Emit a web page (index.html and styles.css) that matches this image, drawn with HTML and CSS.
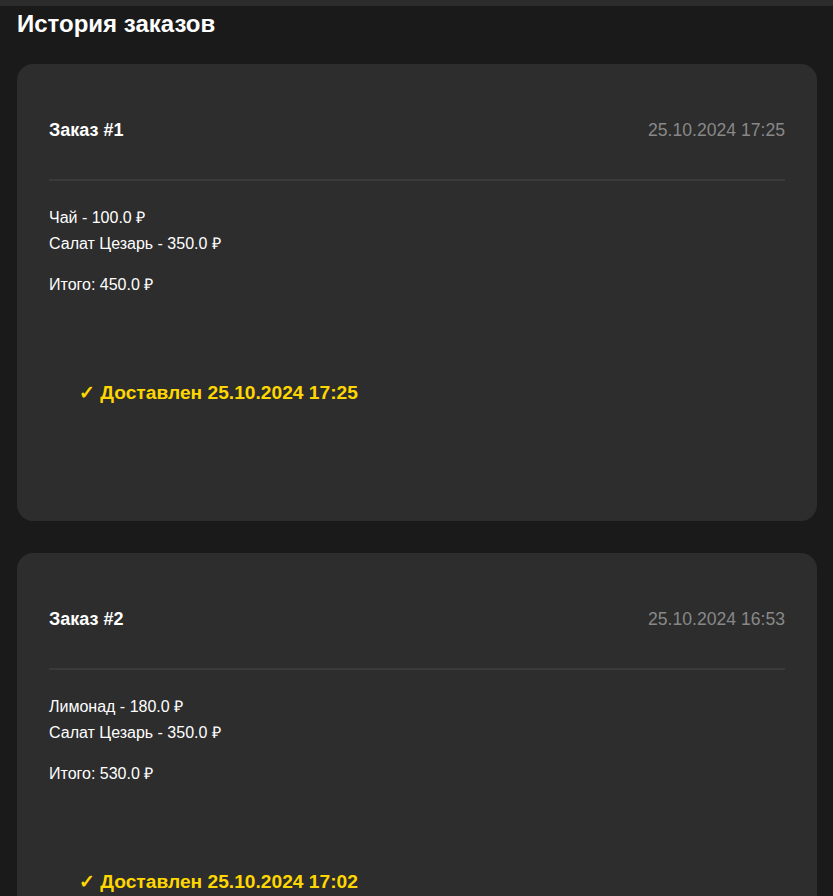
FILE: index.html
```html
<!DOCTYPE html>
<html lang="ru">
<head>
<meta charset="utf-8">
<link rel="stylesheet" href="styles.css">
</head>
<body>
<div class="topbar"></div>
<main class="page">
  <h1 class="title">История заказов</h1>
  <section class="card">
    <div class="card-head">
      <span class="order-no">Заказ #1</span>
      <span class="order-date">25.10.2024 17:25</span>
    </div>
    <ul class="items">
      <li>Чай - 100.0 ₽</li>
      <li>Салат Цезарь - 350.0 ₽</li>
    </ul>
    <div class="total">Итого: 450.0 ₽</div>
    <div class="status">✓ Доставлен 25.10.2024 17:25</div>
  </section>
  <section class="card">
    <div class="card-head">
      <span class="order-no">Заказ #2</span>
      <span class="order-date">25.10.2024 16:53</span>
    </div>
    <ul class="items">
      <li>Лимонад - 180.0 ₽</li>
      <li>Салат Цезарь - 350.0 ₽</li>
    </ul>
    <div class="total">Итого: 530.0 ₽</div>
    <div class="status">✓ Доставлен 25.10.2024 17:02</div>
  </section>
</main>
</body>
</html>
```
FILE: styles.css
```css
html, body {
  margin: 0;
  padding: 0;
  background: #1a1a1a;
  color: #fff;
  font-family: "Liberation Sans", Arial, sans-serif;
}
.topbar {
  height: 6px;
  background: #2c2c2c;
}
.page {
  padding: 4px 16px 0 17px;
}
.title {
  margin: 0 0 26px;
  font-size: 24px;
  line-height: 28px;
  font-weight: bold;
}
.card {
  background: #2d2d2d;
  border-radius: 16px;
  padding: 32px;
  margin-bottom: 32px;
}
.card-head {
  display: flex;
  justify-content: space-between;
  align-items: center;
  padding: 23px 0 38px;
  border-bottom: 2px solid #3a3a3a;
  line-height: 22px;
}
.order-no {
  font-size: 18px;
  font-weight: bold;
}
.order-date {
  font-size: 17.6px;
  color: #888;
}
.items {
  list-style: none;
  margin: 24px 0 0;
  padding: 0;
}
.items li, .total {
  font-size: 16px;
  line-height: 26px;
}
.total {
  margin-top: 15px;
}
.status {
  margin: 51px 0 52px;
  padding: 32px 32px 32px 30px;
  color: #ffd700;
  font-weight: bold;
  font-size: 19.2px;
  line-height: 24px;
}
```
